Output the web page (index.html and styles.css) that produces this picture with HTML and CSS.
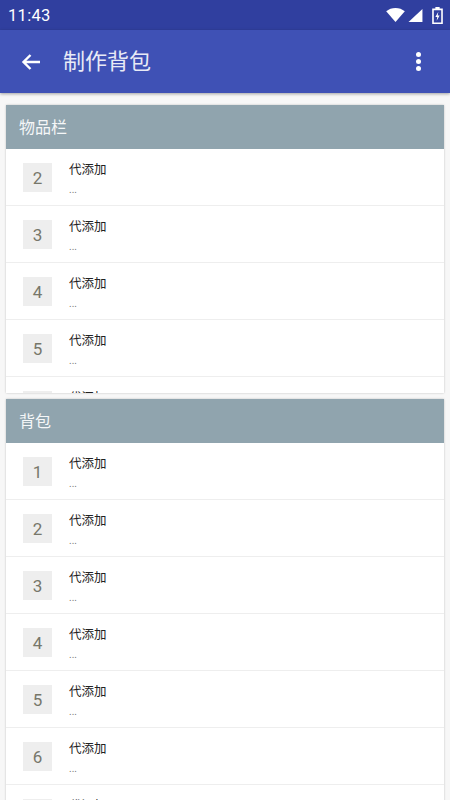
FILE: index.html
```html
<!DOCTYPE html>
<html lang="zh">
<head>
<meta charset="utf-8">
<title>制作背包</title>
<link rel="stylesheet" href="styles.css">
</head>
<body>
<div class="screen">
  <div class="status">
    <span class="time">11:43</span>
    <div class="status-icons">
      <svg class="ic-wifi" viewBox="0 0 20 15"><path d="M0 3.6C2.8 1.3 6.2 0 10 0s7.2 1.3 10 3.6L10 15z" fill="#fff"/></svg>
      <svg class="ic-signal" viewBox="0 0 15 14"><path d="M15 0v14H0z" fill="#fff"/></svg>
      <svg class="ic-batt" viewBox="0 0 10 16"><path fill-rule="evenodd" d="M3 0h4v1.5h3V16H0V1.500h3zM1.500 3v11.500h7V3z" fill="#fff"/><path d="M5.800 4.500 3 9.500h1.800L4.200 13 7 8H5.200z" fill="#fff"/></svg>
    </div>
  </div>
  <header class="appbar">
    <svg class="ic-back" viewBox="0 0 20 18"><path d="M19 9H3M9.500 2 2.500 9l7 7" fill="none" stroke="#fff" stroke-width="2.400"/></svg>
    <h1 class="title">制作背包</h1>
    <div class="more"><i></i><i></i><i></i></div>
  </header>
  <main class="content">
    <section class="card card-top">
      <div class="card-head">物品栏</div>
      <div class="row"><div class="num">2</div><div class="info"><div class="name">代添加</div><div class="sub">...</div></div></div>
      <div class="row"><div class="num">3</div><div class="info"><div class="name">代添加</div><div class="sub">...</div></div></div>
      <div class="row"><div class="num">4</div><div class="info"><div class="name">代添加</div><div class="sub">...</div></div></div>
      <div class="row"><div class="num">5</div><div class="info"><div class="name">代添加</div><div class="sub">...</div></div></div>
      <div class="row"><div class="num">6</div><div class="info"><div class="name">代添加</div><div class="sub">...</div></div></div>
    </section>
    <section class="card card-bottom">
      <div class="card-head">背包</div>
      <div class="row"><div class="num">1</div><div class="info"><div class="name">代添加</div><div class="sub">...</div></div></div>
      <div class="row"><div class="num">2</div><div class="info"><div class="name">代添加</div><div class="sub">...</div></div></div>
      <div class="row"><div class="num">3</div><div class="info"><div class="name">代添加</div><div class="sub">...</div></div></div>
      <div class="row"><div class="num">4</div><div class="info"><div class="name">代添加</div><div class="sub">...</div></div></div>
      <div class="row"><div class="num">5</div><div class="info"><div class="name">代添加</div><div class="sub">...</div></div></div>
      <div class="row"><div class="num">6</div><div class="info"><div class="name">代添加</div><div class="sub">...</div></div></div>
      <div class="row"><div class="num">7</div><div class="info"><div class="name">代添加</div><div class="sub">...</div></div></div>
    </section>
  </main>
</div>
</body>
</html>
```
FILE: styles.css
```css
* { box-sizing: border-box; }
html, body { margin: 0; padding: 0; }
body { font-family: Roboto, "Noto Sans CJK SC", sans-serif; background: #f7f7f7; }
.screen { width: 450px; height: 800px; overflow: hidden; display: flex; flex-direction: column; }
.status { height: 30px; flex: none; background: #303f9f; color: #fff; display: flex; align-items: center; justify-content: space-between; padding: 0 7px 0 8px; }
.time { font-size: 16.500px; letter-spacing: .3px; }
.status-icons { display: flex; align-items: center; gap: 3px; }
.ic-wifi { width: 19px; height: 14px; }
.ic-signal { width: 15px; height: 13px; }
.ic-batt { width: 11px; height: 17px; margin-left: 6px; }
.appbar { height: 63px; flex: none; background: #3f51b5; color: #fff; display: flex; align-items: center; padding: 0 29px 0 21px; box-shadow: 0 1px 3px rgba(0,0,0,.35); position: relative; }
.ic-back { width: 20px; height: 18px; }
.title { font-size: 22px; line-height: 26px; font-weight: 400; margin: 0 0 0 22px; flex: 1; color: #e8eaf6; }
.more { display: flex; flex-direction: column; gap: 2px; }
.more i { display: block; width: 5px; height: 5px; border-radius: 50%; background: #fff; }
.content { flex: 1; min-height: 0; padding: 12px 6px 0; display: flex; flex-direction: column; gap: 6px; }
.card { background: #fff; overflow: hidden; box-shadow: 0 0 2px rgba(0,0,0,.22); flex: none; }
.card-top { height: 288px; }
.card-bottom { height: 420px; }
.card-head { height: 44px; background: #90a4ae; color: #f5f7f8; font-size: 16px; line-height: 46px; padding-left: 13px; }
.row { height: 57px; display: flex; align-items: flex-start; padding: 14px 0 0 17px; border-bottom: 1px solid #eee; }
.num { width: 29px; height: 29px; background: #eee; color: #77776a; font-size: 17px; line-height: 30px; text-align: center; flex: none; }
.info { margin-left: 17px; }
.name { font-size: 12.500px; line-height: 14px; color: #222; }
.sub { font-size: 10px; line-height: 12px; color: #777; margin-top: 7px; }
```
